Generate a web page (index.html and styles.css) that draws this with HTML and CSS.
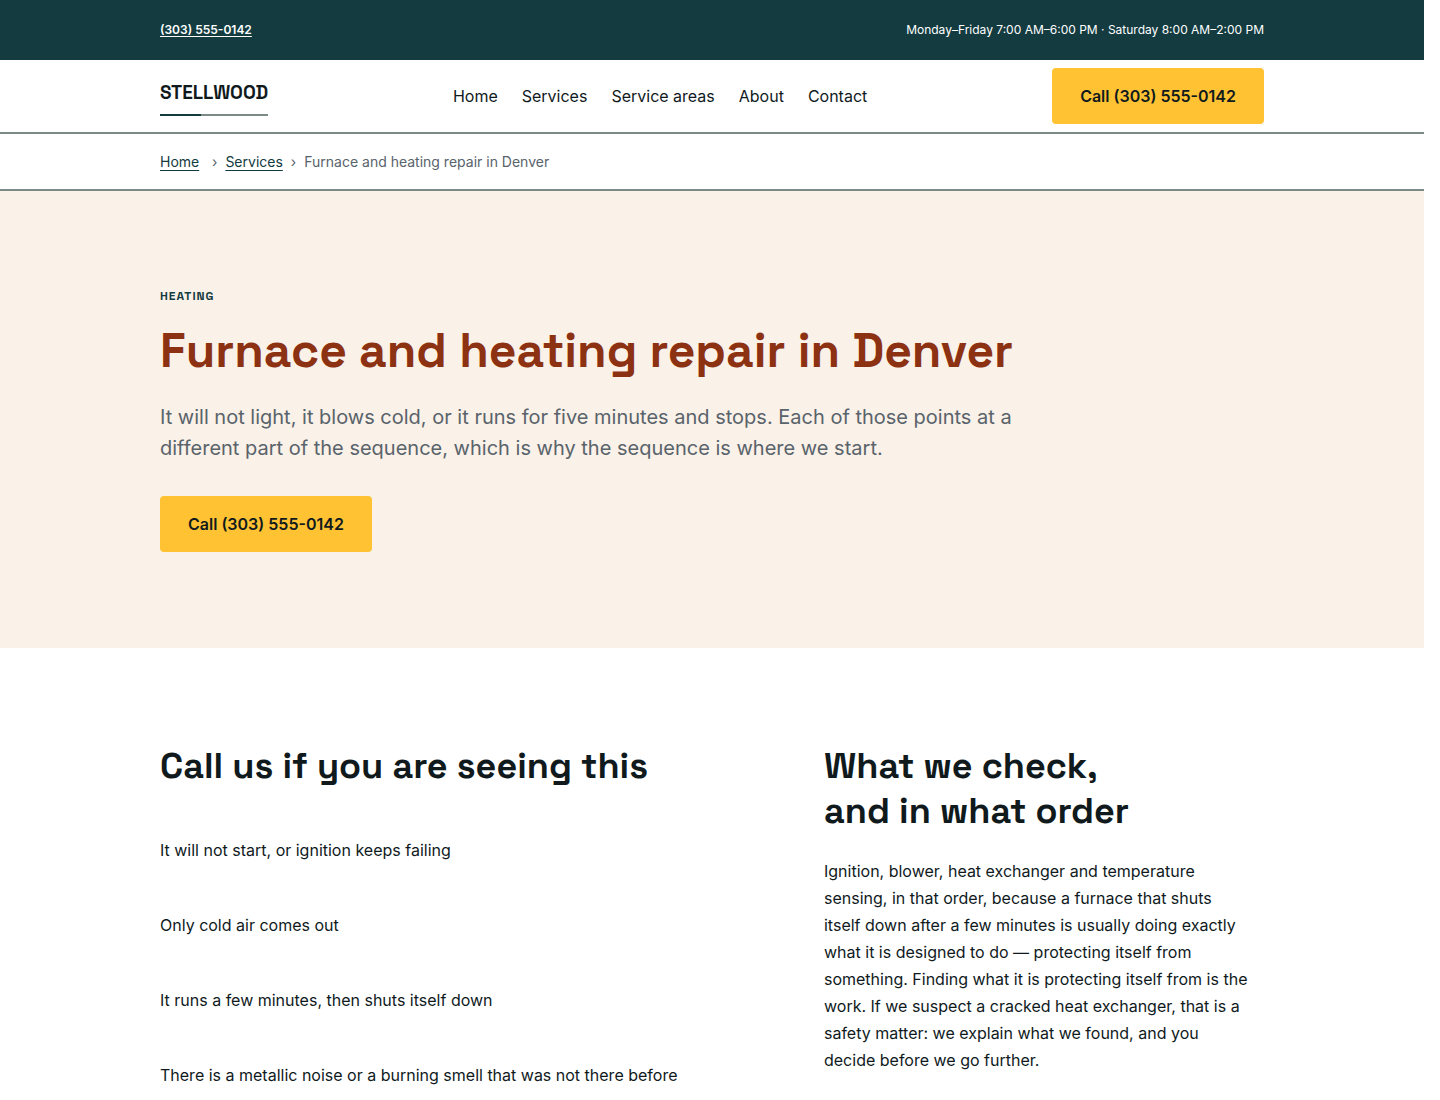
FILE: index.html
```html
<!DOCTYPE html>
<html lang="en">
<head>
<meta charset="utf-8">
<meta name="viewport" content="width=device-width, initial-scale=1">
<title>Furnace and heating repair in Denver | Stellwood</title>
<link rel="stylesheet" href="styles.css">
</head>
<body>
<div class="topbar">
  <div class="container topbar-inner">
    <a class="topbar-phone" href="tel:+13035550142">(303) 555-0142</a>
    <span class="topbar-hours">Monday–Friday 7:00 AM–6:00 PM · Saturday 8:00 AM–2:00 PM</span>
  </div>
</div>
<header class="header">
  <div class="container header-inner">
    <a class="brand" href="#">STELLWOOD</a>
    <nav class="nav" aria-label="Main">
      <a href="#">Home</a>
      <a href="#">Services</a>
      <a href="#">Service areas</a>
      <a href="#">About</a>
      <a href="#">Contact</a>
    </nav>
    <a class="button" href="tel:+13035550142">Call (303) 555-0142</a>
  </div>
</header>
<nav class="breadcrumb" aria-label="Breadcrumb">
  <ol class="container breadcrumb-list">
    <li><a href="#">Home</a></li>
    <li><a href="#">Services</a></li>
    <li>Furnace and heating repair in Denver</li>
  </ol>
</nav>
<main>
  <section class="hero">
    <div class="container">
      <p class="eyebrow">HEATING</p>
      <h1 class="hero-title">Furnace and heating repair in Denver</h1>
      <p class="lead">It will not light, it blows cold, or it runs for five minutes and stops. Each of those points at a different part of the sequence, which is why the sequence is where we start.</p>
      <a class="button" href="tel:+13035550142">Call (303) 555-0142</a>
    </div>
  </section>
  <section class="details">
    <div class="container details-grid">
      <div>
        <h2 class="section-title">Call us if you are seeing this</h2>
        <ul class="symptoms">
          <li>It will not start, or ignition keeps failing</li>
          <li>Only cold air comes out</li>
          <li>It runs a few minutes, then shuts itself down</li>
          <li>There is a metallic noise or a burning smell that was not there before</li>
        </ul>
      </div>
      <div>
        <h2 class="section-title">What we check,<br>and in what order</h2>
        <p class="body-text">Ignition, blower, heat exchanger and temperature sensing, in that order, because a furnace that shuts itself down after a few minutes is usually doing exactly what it is designed to do — protecting itself from something. Finding what it is protecting itself from is the work. If we suspect a cracked heat exchanger, that is a safety matter: we explain what we found, and you decide before we go further.</p>
      </div>
    </div>
  </section>
</main>
</body>
</html>
```
FILE: styles.css
```css
:root {
  --ink: #101a1d;
  --teal: #133b40;
  --rust: #8c3213;
  --amber: #ffc233;
  --sand: #faf1e8;
  --slate: #59636b;
  --line: #7b8987;
  --display: "Space Grotesk", Inter, sans-serif;
}

* { box-sizing: border-box; }

body {
  margin: 0;
  padding-right: 16px;
  background: #fff;
  color: var(--ink);
  font-family: Inter, "Liberation Sans", sans-serif;
  font-size: 16px;
  line-height: 27px;
}

a { color: inherit; text-decoration: none; }
h1, h2, p, ul, ol { margin: 0; padding: 0; }
ul, ol { list-style: none; }

.container {
  max-width: 1152px;
  margin: 0 auto;
  padding: 0 24px;
}

.topbar {
  background: var(--teal);
  color: #fff;
  font-size: 12px;
  line-height: 20px;
}
.topbar-inner {
  display: flex;
  align-items: center;
  justify-content: space-between;
  min-height: 60px;
}
.topbar-phone {
  font-weight: 600;
  text-decoration: underline;
  text-underline-offset: 2px;
}

.header {
  border-bottom: 2px solid var(--line);
  line-height: 25px;
}
.header-inner {
  display: flex;
  align-items: center;
  justify-content: space-between;
  min-height: 72px;
}
.brand {
  padding-top: 4px;
  font-family: var(--display);
  font-size: 19px;
  font-weight: 700;
  line-height: 26px;
}
.brand::after {
  content: "";
  display: block;
  height: 2px;
  margin-top: 8px;
  background: linear-gradient(90deg, var(--teal) 38%, var(--line) 38%);
}
.nav { display: flex; gap: 24px; }

.button {
  display: inline-flex;
  align-items: center;
  min-height: 56px;
  padding: 0 28px;
  border-radius: 4px;
  background: var(--amber);
  font-weight: 600;
}

.breadcrumb {
  border-bottom: 2px solid var(--line);
  color: var(--slate);
  font-size: 14px;
}
.breadcrumb-list {
  display: flex;
  align-items: center;
  gap: 8px;
  min-height: 55px;
}
.breadcrumb-list li { display: flex; gap: 8px; }
.breadcrumb-list li + li::before { content: "›"; }
.breadcrumb-list a {
  min-width: 44px;
  color: var(--teal);
  text-decoration: underline;
  text-underline-offset: 3px;
}

.hero {
  padding: 96px 0;
  background: var(--sand);
}
.eyebrow {
  margin-bottom: 16px;
  color: var(--teal);
  font-family: var(--display);
  font-size: 12px;
  font-weight: 700;
  letter-spacing: 1px;
  line-height: 18px;
}
.hero-title {
  margin-bottom: 21px;
  color: var(--rust);
  font-family: var(--display);
  font-size: 48px;
  font-weight: 700;
  line-height: 60px;
}
.lead {
  max-width: 864px;
  margin-bottom: 32px;
  color: var(--slate);
  font-size: 20px;
  line-height: 31px;
}
.hero .button { display: flex; width: fit-content; }

.details { padding: 96px 0; }
.details-grid {
  display: grid;
  grid-template-columns: 1.4fr 1fr;
  gap: 48px;
}
.section-title {
  margin-bottom: 24px;
  font-family: var(--display);
  font-size: 36px;
  font-weight: 700;
  line-height: 45px;
}
.symptoms li { padding: 24px 0; }
.body-text { max-width: 426px; }
```
